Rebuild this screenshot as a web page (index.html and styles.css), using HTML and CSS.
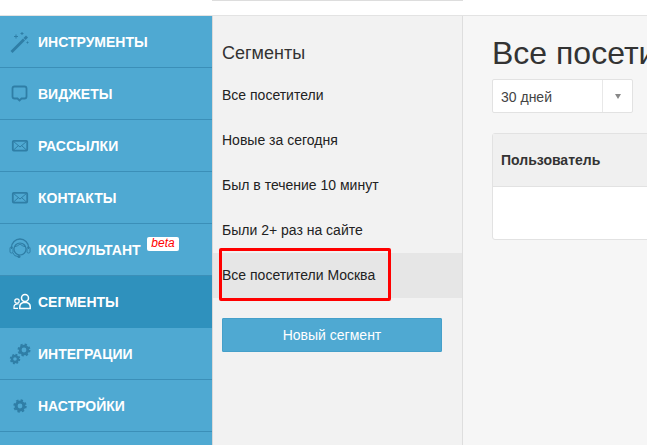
FILE: index.html
```html
<!DOCTYPE html>
<html lang="ru">
<head>
<meta charset="utf-8">
<title>Сегменты</title>
<link rel="stylesheet" href="styles.css">
</head>
<body>
<header class="topbar"><div class="search"></div></header>
<div class="layout">
  <nav class="sidebar">
    <a class="nav-item"><span class="nav-icon"><svg width="26" height="26" viewBox="0 0 26 26"><path d="M6.500 24 4.500 22 17 9.500l2 2z" fill="#2f7ea6"/><path d="M17.500 9l2.500-2.500 2 2L19.500 11z" fill="#2f7ea6"/><path d="M10 5.500v4M8 7.500h4M16 3v3M14.500 4.500h3M21.500 12.500v2M20.500 13.500h2" stroke="#2f7ea6" stroke-width="1"/></svg></span><span class="nav-label">ИНСТРУМЕНТЫ</span></a>
    <a class="nav-item"><span class="nav-icon"><svg width="26" height="26" viewBox="0 0 26 26"><path d="M8.500 5.500h10q2 0 2 2v8q0 2-2 2h-3l-2 2-2-2h-3q-2 0-2-2v-8q0-2 2-2z" fill="none" stroke="#2f7ea6" stroke-width="1.800"/></svg></span><span class="nav-label">ВИДЖЕТЫ</span></a>
    <a class="nav-item"><span class="nav-icon"><svg width="26" height="26" viewBox="0 0 26 26"><rect x="6.800" y="7.800" width="14.400" height="9.800" rx="1" fill="none" stroke="#2f7ea6" stroke-width="1.800"/><path d="M7 8l7 6 7-6M7 17.500l5.500-5M21 17.500l-5.500-5" fill="none" stroke="#2f7ea6"/></svg></span><span class="nav-label">РАССЫЛКИ</span></a>
    <a class="nav-item"><span class="nav-icon"><svg width="26" height="26" viewBox="0 0 26 26"><rect x="6.800" y="7.800" width="14.400" height="9.800" rx="1" fill="none" stroke="#2f7ea6" stroke-width="1.800"/><path d="M7 8l7 6 7-6M7 17.500l5.500-5M21 17.500l-5.500-5" fill="none" stroke="#2f7ea6"/></svg></span><span class="nav-label">КОНТАКТЫ</span></a>
    <a class="nav-item"><span class="nav-icon"><svg width="26" height="26" viewBox="0 0 26 26"><circle cx="14" cy="12" r="6" fill="none" stroke="#2f7ea6" stroke-width="1.200"/><path d="M5.500 12v-1.500a8.500 8.500 0 0 1 17 0V12" fill="none" stroke="#2f7ea6" stroke-width="1.300"/><rect x="4" y="10" width="3" height="6" rx="1.200" fill="none" stroke="#2f7ea6"/><rect x="21" y="10" width="3" height="6" rx="1.200" fill="none" stroke="#2f7ea6"/><path d="M8 10q4-1 6-3 2 2 6 3M7 16q1 3.500 5 3.500" fill="none" stroke="#2f7ea6"/><circle cx="13" cy="19.500" r="1.500" fill="#2f7ea6"/></svg></span><span class="nav-label">КОНСУЛЬТАНТ</span><span class="badge">beta</span></a>
    <a class="nav-item nav-item-active"><span class="nav-icon"><svg width="26" height="26" viewBox="0 0 26 26"><circle cx="19" cy="9" r="3.500" fill="none" stroke="#fff" stroke-width="1.500"/><path d="M13.800 19.500v-2q0-3 3.500-4h3.400q3.500 1 3.500 4v2z" fill="none" stroke="#fff" stroke-width="1.500"/><circle cx="11" cy="12" r="2.200" fill="none" stroke="#fff" stroke-width="1.200"/><path d="M12 19.300H8v-1.500q0-2.500 3-3h1.500" fill="none" stroke="#fff" stroke-width="1.200"/></svg></span><span class="nav-label">СЕГМЕНТЫ</span></a>
    <a class="nav-item"><span class="nav-icon"><svg width="28" height="28" viewBox="0 0 28 28"><circle cx="18" cy="10" r="3.800" fill="none" stroke="#2f7ea6" stroke-width="2.800"/><circle cx="18" cy="10" r="5.600" fill="none" stroke="#2f7ea6" stroke-width="1.800" stroke-dasharray="2.300 2.100"/><circle cx="9" cy="19" r="3" fill="none" stroke="#2f7ea6" stroke-width="2.400"/><circle cx="9" cy="19" r="4.500" fill="none" stroke="#2f7ea6" stroke-width="1.500" stroke-dasharray="1.900 1.630"/></svg></span><span class="nav-label">ИНТЕГРАЦИИ</span></a>
    <a class="nav-item"><span class="nav-icon"><svg width="26" height="26" viewBox="0 0 26 26"><circle cx="14" cy="13" r="3.900" fill="none" stroke="#2f7ea6" stroke-width="3"/><circle cx="14" cy="13" r="5.800" fill="none" stroke="#2f7ea6" stroke-width="1.800" stroke-dasharray="2.350 2.200"/></svg></span><span class="nav-label">НАСТРОЙКИ</span></a>
  </nav>
  <aside class="segments">
    <h2 class="segments-title">Сегменты</h2>
    <ul class="segment-list">
      <li class="segment">Все посетители</li>
      <li class="segment">Новые за сегодня</li>
      <li class="segment">Был в течение 10 минут</li>
      <li class="segment">Были 2+ раз на сайте</li>
      <li class="segment segment-active">Все посетители Москва<span class="highlight"></span></li>
    </ul>
    <button class="new-segment">Новый сегмент</button>
  </aside>
  <main class="content">
    <h1 class="content-title">Все посетители Москва</h1>
    <div class="select"><span class="select-value">30 дней</span><span class="select-arrow"><i class="caret"></i></span></div>
    <div class="table">
      <div class="table-head">Пользователь</div>
      <div class="table-body"></div>
    </div>
  </main>
</div>
</body>
</html>
```
FILE: styles.css
```css
* { box-sizing: border-box; }
html, body { margin: 0; height: 100%; overflow: hidden; }
body {
  display: flex;
  flex-direction: column;
  width: 647px;
  height: 445px;
  font-family: "Liberation Sans", Arial, sans-serif;
  background: #fff;
  color: #333;
}
.topbar {
  flex: none;
  height: 16px;
  background: #fff;
  border-bottom: 1px solid #e3e3e3;
  padding-left: 212px;
}
.search {
  width: 251px;
  height: 1px;
  background: #ddd;
}
.layout { flex: 1; display: flex; min-height: 0; }
.sidebar {
  flex: none;
  width: 213px;
  background: #4fa9d2;
  border-right: 1px solid #d9d9d9;
}
.nav-item {
  position: relative;
  display: flex;
  align-items: center;
  height: 52px;
  padding-left: 6px;
  border-bottom: 1px solid #3b8fb8;
  color: #fff;
  font-size: 14px;
  font-weight: 700;
}
.nav-item-active { background: #2f91bd; border-bottom-color: #2f91bd; }
.nav-icon {
  flex: none;
  width: 32px;
  height: 28px;
  display: flex;
  align-items: center;
}
.nav-label { white-space: nowrap; }
.badge {
  position: absolute;
  left: 147px;
  top: 13px;
  width: 32px;
  height: 14px;
  background: #fff;
  border-radius: 2px;
  color: #f00;
  font-size: 12px;
  font-weight: 400;
  font-style: italic;
  line-height: 13px;
  text-align: center;
}
.segments {
  flex: none;
  width: 250px;
  background: #f2f2f2;
  border-right: 1px solid #dedede;
}
.segments-title {
  margin: 0;
  padding: 28px 0 0 9px;
  font-size: 18px;
  line-height: 18px;
  font-weight: 400;
  color: #333;
}
.segment-list { list-style: none; margin: 11px 0 0; padding: 0; }
.segment {
  position: relative;
  height: 45px;
  padding-left: 9px;
  font-size: 14px;
  line-height: 45px;
  color: #222;
  white-space: nowrap;
}
.segment-active { background: #e6e6e6; }
.highlight {
  position: absolute;
  left: 6px;
  top: -5px;
  width: 172px;
  height: 53px;
  border: 3px solid #f00;
  border-radius: 2px;
}
.new-segment {
  display: block;
  width: 220px;
  height: 34px;
  margin: 20px 0 0 9px;
  background: #4fa9d2;
  border: 1px solid #45a0ca;
  border-radius: 1px;
  color: #fff;
  font: 14px "Liberation Sans", Arial, sans-serif;
}
.content {
  flex: 1;
  min-width: 0;
  background: #f6f6f6;
  padding-left: 29px;
  overflow: hidden;
}
.content-title {
  margin: 0;
  padding-top: 20px;
  font-size: 32px;
  line-height: 34px;
  font-weight: 400;
  color: #333;
  white-space: nowrap;
}
.select {
  display: flex;
  width: 141px;
  height: 34px;
  margin-top: 9px;
  background: #fff;
  border: 1px solid #e2e2e2;
  border-radius: 2px;
}
.select-value {
  flex: 1;
  padding-left: 8px;
  font-size: 14px;
  line-height: 34px;
  color: #444;
}
.select-arrow {
  flex: none;
  width: 30px;
  border-left: 1px solid #e8e8e8;
  display: flex;
  align-items: center;
  justify-content: center;
}
.caret {
  width: 0;
  height: 0;
  border-left: 3.500px solid transparent;
  border-right: 3.500px solid transparent;
  border-top: 5px solid #888;
}
.table {
  width: 400px;
  height: 107px;
  margin-top: 20px;
  background: #fff;
  border: 1px solid #e2e2e2;
  border-radius: 3px;
}
.table-head {
  height: 53px;
  padding-left: 8px;
  background: #f0f0f0;
  border-bottom: 1px solid #e2e2e2;
  font-size: 14px;
  font-weight: 700;
  line-height: 53px;
  color: #333;
}
```
